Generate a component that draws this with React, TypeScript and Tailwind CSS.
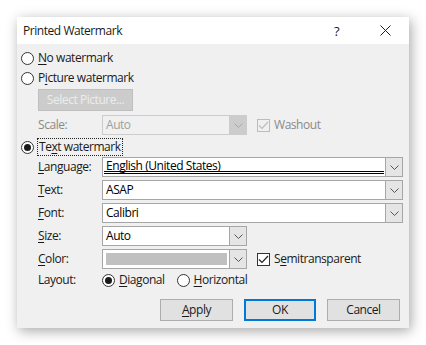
import React from "react";

const font = "font-['Open_Sans','Noto_Sans',sans-serif] text-[12px] leading-none tracking-[-0.45px]";

function U({ children }: { children: React.ReactNode }) {
  return <span className="underline underline-offset-[2px] decoration-1">{children}</span>;
}

function Radio({ on }: { on?: boolean }) {
  return (
    <span className="flex h-[13px] w-[13px] shrink-0 items-center justify-center rounded-full border border-[#333333] bg-white">
      {on && <span className="h-[7px] w-[7px] rounded-full bg-[#1a1a1a]" />}
    </span>
  );
}

function Check({ on, disabled }: { on?: boolean; disabled?: boolean }) {
  return (
    <span
      className={
        disabled
          ? "flex h-[13px] w-[13px] items-center justify-center border border-[#bcbcbc] bg-[#f0f0f0]"
          : "flex h-[13px] w-[13px] items-center justify-center border border-[#333333] bg-white"
      }
    >
      {on && (
        <svg width="11" height="9" viewBox="0 0 11 9">
          <path d="M1 4.5 L4 7.5 L10 1" fill="none" stroke={disabled ? "#bcbcbc" : "#222"} strokeWidth="1.2" />
        </svg>
      )}
    </span>
  );
}

function Chevron({ color }: { color: string }) {
  return (
    <svg width="9" height="5" viewBox="0 0 9 5">
      <path d="M0.5 0.5 L4.5 4.5 L8.5 0.5" fill="none" stroke={color} strokeWidth="1" />
    </svg>
  );
}

function Combo({
  wide,
  disabled,
  children,
}: {
  wide?: boolean;
  disabled?: boolean;
  children?: React.ReactNode;
}) {
  return (
    <div
      className={`flex h-[20px] border ${wide ? "w-[301px]" : "w-[145px]"} ${
        disabled ? "border-[#cccccc] bg-[#f0f0f0]" : "border-[#a6a6a6] bg-white"
      }`}
    >
      <div className={`relative flex flex-1 items-center pl-[3px] ${disabled ? "text-[#a0a0a0]" : "text-black"}`}>
        {children}
      </div>
      <div
        className={`flex w-[17px] items-center justify-center border-l ${
          disabled ? "border-[#cccccc] bg-[#cccccc]" : "border-[#a6a6a6] bg-[#e5e5e5]"
        }`}
      >
        <Chevron color={disabled ? "#a8a8a8" : "#555555"} />
      </div>
    </div>
  );
}

function Row({ label, children }: { label: React.ReactNode; children: React.ReactNode }) {
  return (
    <div className="mt-[3px] flex h-[20px] items-center">
      <div className="w-[81px] pl-[17px]">{label}</div>
      {children}
    </div>
  );
}

function Btn({ children, primary }: { children: React.ReactNode; primary?: boolean }) {
  return (
    <div
      className={`flex h-[22px] items-center justify-center bg-[#e1e1e1] ${
        primary ? "w-[72px] border-2 border-[#0078d7]" : "w-[73px] border border-[#adadad]"
      }`}
    >
      {children}
    </div>
  );
}

export default function App() {
  return (
    <div className={`h-[345px] w-[426px] bg-white pl-[17px] pt-[17px] text-[#1a1a1a] ${font}`}>
      <div className="flex h-[311px] w-[392px] flex-col bg-[#f0f0f0] shadow-[2px_3px_12px_rgba(0,0,0,0.35)]">
        {/* title bar */}
        <div className="flex h-[27px] items-center bg-white pl-[6px]">
          <span className="flex-1 pt-[1px]">Printed Watermark</span>
          <span className="w-[46px] pt-[1px] text-[13px]">?</span>
          <svg className="mr-[18px]" width="11" height="11" viewBox="0 0 11 11">
            <path d="M0.5 0.5 L10.5 10.5 M10.5 0.5 L0.5 10.5" stroke="#222" strokeWidth="1" />
          </svg>
        </div>

        <div className="flex flex-col pl-[4px]">
          <div className="mt-[5px] flex h-[18px] items-center gap-[4px]">
            <Radio />
            <span>
              <U>N</U>o watermark
            </span>
          </div>
          <div className="mt-[2px] flex h-[18px] items-center gap-[4px]">
            <Radio />
            <span>
              P<U>i</U>cture watermark
            </span>
          </div>
          <div className="ml-[17px] mt-[2px] flex h-[22px] w-[95px] items-center justify-center border border-[#bfbfbf] bg-[#cccccc] text-[#ececec]">
            Select Picture...
          </div>

          <div className="mt-[4px] flex h-[20px] items-center">
            <div className="w-[81px] pl-[17px] text-[#8a8a8a]">Scale:</div>
            <Combo disabled>Auto</Combo>
            <div className="ml-[10px] flex items-center gap-[4px] text-[#8a8a8a]">
              <Check on disabled />
              <span>Washout</span>
            </div>
          </div>

          <div className="mt-[3px] flex h-[18px] items-center gap-[3px]">
            <Radio on />
            <span className="flex h-[18px] items-center border border-dotted border-[#222] px-[1px]">
              Te<U>x</U>t watermark
            </span>
          </div>

          <div className="mt-[1px] flex h-[20px] items-center">
            <div className="w-[81px] pl-[17px]">
              <U>L</U>anguage:
            </div>
            <Combo wide>
              <span className="pb-[3px]">English (United States)</span>
              <span className="absolute bottom-[2px] left-[1px] right-[1px] h-[3px] border-y border-black" />
            </Combo>
          </div>

          <Row label={<><U>T</U>ext:</>}>
            <Combo wide>ASAP</Combo>
          </Row>
          <Row label={<><U>F</U>ont:</>}>
            <Combo wide>Calibri</Combo>
          </Row>
          <Row label={<><U>S</U>ize:</>}>
            <Combo>Auto</Combo>
          </Row>
          <Row label={<><U>C</U>olor:</>}>
            <Combo>
              <span className="h-[12px] w-[121px] bg-[#c0c0c0]" />
            </Combo>
            <div className="ml-[10px] flex items-center gap-[4px]">
              <Check on />
              <span>
                S<U>e</U>mitransparent
              </span>
            </div>
          </Row>

          <div className="mt-[2px] flex h-[18px] items-center">
            <div className="w-[81px] pl-[17px]">Layout:</div>
            <div className="flex items-center gap-[4px]">
              <Radio on />
              <span>
                <U>D</U>iagonal
              </span>
            </div>
            <div className="ml-[12px] flex items-center gap-[4px]">
              <Radio />
              <span>
                <U>H</U>orizontal
              </span>
            </div>
          </div>

          <div className="mt-[10px] flex h-[22px] items-center gap-[11px] pl-[139px]">
            <Btn>
              <U>A</U>pply
            </Btn>
            <Btn primary>OK</Btn>
            <Btn>Cancel</Btn>
          </div>
        </div>
      </div>
    </div>
  );
}
